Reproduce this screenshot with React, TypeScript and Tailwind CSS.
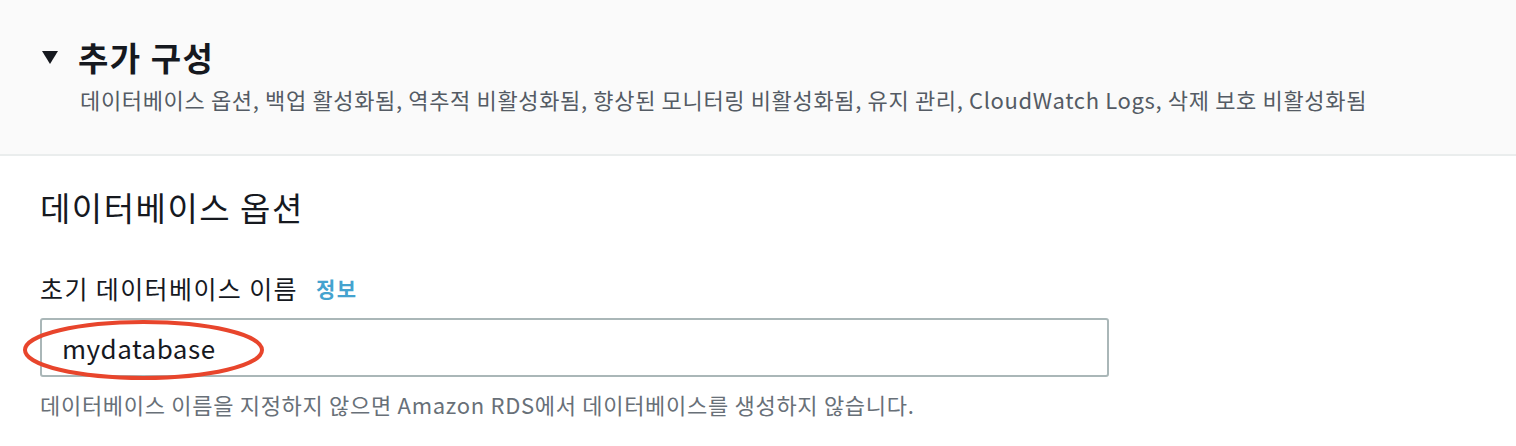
export default function App() {
  return (
    <div
      className="w-[1516px] h-[446px] bg-white overflow-hidden text-[#16191f]"
      style={{ fontFamily: "'Noto Sans CJK KR', 'Noto Sans', sans-serif" }}
    >
      {/* Expandable header */}
      <div className="h-[156px] bg-[#fafafa] border-b-2 border-[#eaeded] pl-[40px] pt-[35px]">
        <div className="flex items-center gap-[18px]">
          <svg width="20" height="16" viewBox="0 0 20 16" className="shrink-0">
            <path d="M2 2 L18 2 L10 15 Z" fill="#16191f" />
          </svg>
          <h2 className="text-[33px] leading-[44px] font-bold tracking-[1.5px]">추가 구성</h2>
        </div>
        <p className="ml-[40px] mt-[6px] text-[22px] leading-[28px] tracking-[0.65px] text-[#545b64]">
          데이터베이스 옵션, 백업 활성화됨, 역추적 비활성화됨, 향상된 모니터링 비활성화됨, 유지 관리, CloudWatch Logs, 삭제 보호 비활성화됨
        </p>
      </div>

      {/* Database options */}
      <div className="px-[40px] pt-[29px]">
        <h3 className="text-[33px] leading-[44px] font-normal tracking-[1.5px]">데이터베이스 옵션</h3>

        <div className="mt-[44px] flex items-center gap-[18px]">
          <span className="text-[25px] leading-[30px] tracking-[1.4px]">초기 데이터베이스 이름</span>
          <span className="text-[21px] leading-[30px] font-bold tracking-[1.5px] text-[#44a3cf]">정보</span>
        </div>

        <div className="relative mt-[15px] w-[1069px]">
          <div className="h-[59px] border-2 border-[#aab7b8] rounded-[3px] bg-white flex items-center px-[20px]">
            <span className="text-[26px] tracking-[0.5px]">mydatabase</span>
          </div>
          <svg
            className="absolute left-[-22px] top-[0px] pointer-events-none"
            width="250"
            height="64"
            viewBox="0 0 250 64"
          >
            <ellipse cx="125.5" cy="32" rx="118.5" ry="28" fill="none" stroke="#e8452c" strokeWidth="4" />
          </svg>
        </div>

        <p className="mt-[13px] text-[22px] leading-[28px] tracking-[0.7px] text-[#687078]">
          데이터베이스 이름을 지정하지 않으면 Amazon RDS에서 데이터베이스를 생성하지 않습니다.
        </p>
      </div>
    </div>
  );
}
